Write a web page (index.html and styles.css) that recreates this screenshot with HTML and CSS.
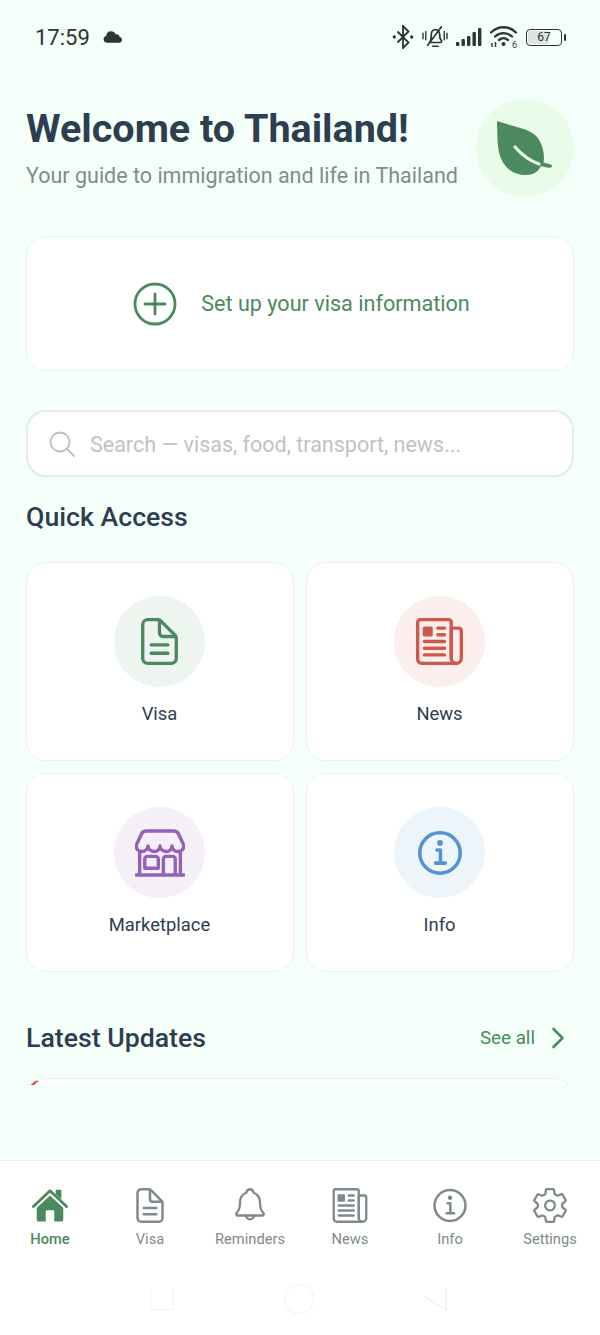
FILE: index.html
```html
<!DOCTYPE html>
<html lang="en">
<head>
<meta charset="utf-8">
<title>Welcome to Thailand</title>
<link rel="stylesheet" href="styles.css">
</head>
<body>
<div class="app">
  <div class="status">
    <div class="status-left">
      <span class="time">17:59</span>
      <svg class="cloud" viewBox="0 0 20 13"><path d="M4 13a3.6 3.6 0 0 1-.6-7.1A5.2 5.2 0 0 1 8.4 1c2.3 0 4 1.300 4.800 3.200a4 4 0 0 1 1.200-.2c1.700 0 3 1.300 3.200 3 1.400.3 2.400 1.500 2.400 3 0 1.700-1.300 3-3 3z"/></svg>
    </div>
    <div class="status-right">
      <svg class="s-bt" viewBox="0 0 24 26"><path d="M6 7l12 12-6 6V1l6 6L6 19" fill="none" stroke="#2d3436" stroke-width="2"/><circle cx="2.500" cy="13" r="1.800"/><circle cx="21.500" cy="13" r="1.800"/></svg>
      <svg class="s-bell" viewBox="0 0 28 26"><path d="M9 17c1-2 1-4 1-7 0-3 2-5 4.500-5s4.500 2 4.500 5c0 3 0 5 2 7 .5 1 0 2-1 2H9c-1 0-.5-1 0-2zM11.500 23h6M6 22L21 2" fill="none" stroke="#2d3436" stroke-width="1.800" stroke-linecap="round"/><path d="M1 9v6M4 7v9M24 7v9M27 9v6" stroke="#2d3436" stroke-width="1.500" stroke-linecap="round"/></svg>
      <svg class="s-signal" viewBox="0 0 26 18"><rect x="0" y="14" width="3.400" height="4" rx="1"/><rect x="5.500" y="11" width="3.400" height="7" rx="1"/><rect x="11" y="8" width="3.400" height="10" rx="1"/><rect x="16.500" y="4" width="3.400" height="14" rx="1"/><rect x="22" y="0" width="3.400" height="18" rx="1"/></svg>
      <svg class="s-wifi" viewBox="0 0 28 26"><path d="M1 8.500C8 1.500 19 1.500 26 8.500M5 12.500c5-4.500 12-4.500 17 0M9 16c3-2.500 6-2.500 9 0" fill="none" stroke="#2d3436" stroke-width="2.300" stroke-linecap="round"/><circle cx="13.500" cy="20" r="2"/><path d="M2 23v-4M5.500 23v-5M8 21h0" stroke="#2d3436" stroke-width="1.500"/><text x="22" y="24" class="s-wifi-num">6</text></svg>
      <div class="battery"><div class="battery-body"><span class="battery-fill"></span><span class="battery-num">67</span></div><span class="battery-cap"></span></div>
    </div>
  </div>

  <main class="main">
    <header class="hero">
      <div>
        <h1 class="title">Welcome to Thailand!</h1>
        <p class="subtitle">Your guide to immigration and life in Thailand</p>
      </div>
      <div class="leaf-badge">
        <svg class="leaf" viewBox="0 0 58 56"><path d="M2.500 1.500C1.500 1 .8 1.500 1 3c.5 8 0 20 2 29 3 14 13 23 27 23 7 0 12-3 15-9l6 1.500c1.500.3 3.500.5 4.500-.2 1-.9.500-2.300-1-2.800l-7-2C49 35 47 26 42 18 34 8 18 7 2.500 1.500z" fill="#4a8a5e"/><path d="M19 27c6 7 13 13 24 17" fill="none" stroke="#e9fbe9" stroke-width="3.200" stroke-linecap="round"/></svg>
      </div>
    </header>

    <section class="setup">
      <svg class="setup-icon" viewBox="0 0 44 44"><circle cx="22" cy="22" r="20" fill="none" stroke="#4a8a5e" stroke-width="2.800"/><path d="M22 12v20M12 22h20" stroke="#4a8a5e" stroke-width="2.800" stroke-linecap="round"/></svg>
      <span class="setup-text">Set up your visa information</span>
    </section>

    <div class="search">
      <svg class="search-icon" viewBox="0 0 26 26"><circle cx="11" cy="11" r="9.500" fill="none" stroke="#b9bec0" stroke-width="1.800"/><path d="M18 18l7 7" stroke="#b9bec0" stroke-width="1.800" stroke-linecap="round"/></svg>
      <span class="search-text">Search — visas, food, transport, news...</span>
    </div>

    <h2 class="section-title quick-title">Quick Access</h2>

    <div class="grid">
      <div class="tile">
        <div class="tile-circle c-green">
          <svg class="tile-icon large" viewBox="60 32 392 448" fill="none" stroke="#4a8a5e" stroke-width="32" stroke-linejoin="round" stroke-linecap="round"><path d="M416 221.250V416a48 48 0 0 1-48 48H144a48 48 0 0 1-48-48V96a48 48 0 0 1 48-48h98.750a32 32 0 0 1 22.620 9.370l141.260 141.260a32 32 0 0 1 9.370 22.620z"/><path d="M256 56v120a32 32 0 0 0 32 32h120M176 288h160M176 368h160"/></svg>
        </div>
        <span class="tile-label">Visa</span>
      </div>
      <div class="tile">
        <div class="tile-circle c-red">
          <svg class="tile-icon large" viewBox="32 32 448 448" fill="none" stroke="#d0584a" stroke-width="32" stroke-linejoin="round" stroke-linecap="round"><path d="M368 415.860V72a24.070 24.070 0 0 0-24-24H72a24.070 24.070 0 0 0-24 24v352a40.120 40.120 0 0 0 40 40h328"/><path d="M416 464h0a48 48 0 0 1-48-48V128h72a24 24 0 0 1 24 24v264a48 48 0 0 1-48 48z"/><path d="M240 128h64M240 192h64M112 256h192M112 320h192M112 384h192"/><path fill="#d0584a" stroke="none" d="M176 208h-64a16 16 0 0 1-16-16v-64a16 16 0 0 1 16-16h64a16 16 0 0 1 16 16v64a16 16 0 0 1-16 16z"/></svg>
        </div>
        <span class="tile-label">News</span>
      </div>
      <div class="tile">
        <div class="tile-circle c-purple">
          <svg class="tile-icon wide" viewBox="20 32 472 448" fill="none" stroke="#9361b5" stroke-width="32" stroke-linejoin="round" stroke-linecap="round"><path d="M448 448V240M64 240v208M382.470 48H129.530c-21.790 0-41.470 12-49.930 30.460L36.300 173c-14.580 31.810 9.630 67.850 47.190 69h2c31.400 0 56.850-25.180 56.850-52.230 0 27 25.460 52.230 56.860 52.230s56.800-23.380 56.800-52.230c0 27 25.450 52.230 56.850 52.230s56.860-23.380 56.860-52.230c0 28.850 25.450 52.230 56.850 52.230h1.950c37.560-1.170 61.770-37.210 47.190-69l-43.300-94.540C423.940 60 404.260 48 382.470 48zM32 464h448M136 288h80a24 24 0 0 1 24 24v88H112v-88a24 24 0 0 1 24-24zM288 464V312a24 24 0 0 1 24-24h64a24 24 0 0 1 24 24v152"/></svg>
        </div>
        <span class="tile-label">Marketplace</span>
      </div>
      <div class="tile">
        <div class="tile-circle c-blue">
          <svg class="tile-icon" viewBox="48 48 400 400" fill="none" stroke="#5295d2" stroke-width="32" stroke-linejoin="round" stroke-linecap="round"><path d="M248 64C146.390 64 64 146.390 64 248s82.390 184 184 184 184-82.390 184-184S349.610 64 248 64z"/><path d="M220 220h32v116"/><path d="M208 340h88"/><path fill="#5295d2" stroke="none" d="M248 130a26 26 0 1 0 26 26 26 26 0 0 0-26-26z"/></svg>
        </div>
        <span class="tile-label">Info</span>
      </div>
    </div>

    <div class="latest-head">
      <h2 class="section-title">Latest Updates</h2>
      <div class="see-all">
        <span>See all</span>
        <svg class="chevron" viewBox="0 0 14 22"><path d="M2.500 2l9 9-9 9" fill="none" stroke="#4a8a5e" stroke-width="2.600" stroke-linecap="round" stroke-linejoin="round"/></svg>
      </div>
    </div>
    <div class="update-card"></div>
  </main>

  <div class="spacer"></div>

  <nav class="nav">
    <div class="tabs">
      <div class="tab active">
        <svg class="tab-icon" viewBox="0 0 38 36"><path d="M1.500 19L19 2.500 36.500 19" fill="none" stroke="#4a8a5e" stroke-width="3" stroke-linecap="round" stroke-linejoin="round"/><path d="M25 1.500h6v10l-6-5.500z" fill="#4a8a5e"/><path d="M19 7.500L5 20.500V33a2 2 0 0 0 2 2h7.500V24a1 1 0 0 1 1-1h7a1 1 0 0 1 1 1v11H31a2 2 0 0 0 2-2V20.500z" fill="#4a8a5e"/></svg>
        <span class="tab-label">Home</span>
      </div>
      <div class="tab">
        <svg class="tab-icon" viewBox="68 32 376 448" fill="none" stroke="#7e8a8e" stroke-width="32" stroke-linejoin="round" stroke-linecap="round"><path d="M416 221.250V416a48 48 0 0 1-48 48H144a48 48 0 0 1-48-48V96a48 48 0 0 1 48-48h98.750a32 32 0 0 1 22.620 9.370l141.260 141.260a32 32 0 0 1 9.370 22.620z"/><path d="M256 56v120a32 32 0 0 0 32 32h120M176 288h160M176 368h160"/></svg>
        <span class="tab-label">Visa</span>
      </div>
      <div class="tab">
        <svg class="tab-icon" viewBox="64 32 384 448" fill="none" stroke="#7e8a8e" stroke-width="30" stroke-linejoin="round" stroke-linecap="round"><path d="M427.680 351.430C402 320 383.870 304 383.870 217.350 383.870 138 343.350 109.730 310 96c-4.430-1.820-8.600-6-9.950-10.550C294.200 65.540 277.800 48 256 48s-38.210 17.550-44 37.470c-1.350 4.600-5.520 8.710-9.950 10.530-33.390 13.750-73.870 41.920-73.870 121.350C128.130 304 110 320 84.320 351.430 73.680 364.450 83 384 101.610 384h308.880c18.510 0 27.770-19.610 17.190-32.570z"/><path d="M206 384a50 50 0 0 0 100 0"/></svg>
        <span class="tab-label">Reminders</span>
      </div>
      <div class="tab">
        <svg class="tab-icon" viewBox="32 32 448 448" fill="none" stroke="#7e8a8e" stroke-width="30" stroke-linejoin="round" stroke-linecap="round"><path d="M368 415.860V72a24.070 24.070 0 0 0-24-24H72a24.070 24.070 0 0 0-24 24v352a40.120 40.120 0 0 0 40 40h328"/><path d="M416 464h0a48 48 0 0 1-48-48V128h72a24 24 0 0 1 24 24v264a48 48 0 0 1-48 48z"/><path d="M240 128h64M240 192h64M112 256h192M112 320h192M112 384h192"/><path fill="#7e8a8e" stroke="none" d="M176 208h-64a16 16 0 0 1-16-16v-64a16 16 0 0 1 16-16h64a16 16 0 0 1 16 16v64a16 16 0 0 1-16 16z"/></svg>
        <span class="tab-label">News</span>
      </div>
      <div class="tab">
        <svg class="tab-icon" viewBox="40 40 416 416" fill="none" stroke="#7e8a8e" stroke-width="30" stroke-linejoin="round" stroke-linecap="round"><path d="M248 64C146.390 64 64 146.390 64 248s82.390 184 184 184 184-82.390 184-184S349.610 64 248 64z"/><path d="M220 220h32v116"/><path d="M208 340h88"/><path fill="#7e8a8e" stroke="none" d="M248 130a26 26 0 1 0 26 26 26 26 0 0 0-26-26z"/></svg>
        <span class="tab-label">Info</span>
      </div>
      <div class="tab">
        <svg class="tab-icon" viewBox="26 26 460 460" fill="none" stroke="#7e8a8e" stroke-width="30" stroke-linejoin="round" stroke-linecap="round"><path d="M262.290 192.310a64 64 0 1 0 57.400 57.400 64.130 64.130 0 0 0-57.400-57.400zM416.390 256a154.340 154.340 0 0 1-1.530 20.790l45.210 35.460a10.810 10.810 0 0 1 2.450 13.750l-42.770 74a10.810 10.810 0 0 1-13.140 4.590l-44.900-18.080a16.110 16.110 0 0 0-15.170 1.750A164.480 164.480 0 0 1 325 400.800a15.940 15.940 0 0 0-8.820 12.140l-6.730 47.890a11.080 11.080 0 0 1-10.680 9.170h-85.540a11.110 11.110 0 0 1-10.690-8.870l-6.720-47.820a16.070 16.070 0 0 0-9-12.220 155.300 155.300 0 0 1-21.460-12.570 16 16 0 0 0-15.110-1.710l-44.890 18.070a10.810 10.810 0 0 1-13.140-4.580l-42.770-74a10.800 10.800 0 0 1 2.450-13.750l38.210-30a16.050 16.050 0 0 0 6-14.080c-.36-4.170-.58-8.330-.58-12.500s.21-8.270.58-12.350a16 16 0 0 0-6.070-13.940l-38.190-30A10.810 10.810 0 0 1 49.480 186l42.770-74a10.810 10.810 0 0 1 13.140-4.590l44.900 18.080a16.110 16.110 0 0 0 15.170-1.750A164.480 164.480 0 0 1 187 111.200a15.940 15.940 0 0 0 8.820-12.140l6.730-47.890A11.080 11.080 0 0 1 213.230 42h85.540a11.110 11.110 0 0 1 10.690 8.870l6.720 47.820a16.070 16.070 0 0 0 9 12.220 155.300 155.300 0 0 1 21.460 12.570 16 16 0 0 0 15.110 1.710l44.890-18.070a10.810 10.810 0 0 1 13.140 4.580l42.770 74a10.800 10.800 0 0 1-2.450 13.750l-38.210 30a16.050 16.050 0 0 0-6.050 14.080c.33 4.140.55 8.300.55 12.470z"/></svg>
        <span class="tab-label">Settings</span>
      </div>
    </div>
    <div class="gestures">
      <span class="g-square"></span>
      <span class="g-circle"></span>
      <svg class="g-back" viewBox="0 0 24 24"><path d="M1 10l21 13V1" fill="none" stroke="#f0f2f1" stroke-width="1.500" stroke-linejoin="round"/></svg>
    </div>
  </nav>
</div>
</body>
</html>
```

FILE: styles.css
```css
* {
  box-sizing: border-box;
}

html,
body {
  margin: 0;
  padding: 0;
}

body {
  font-family: Roboto, "Liberation Sans", sans-serif;
  background: #f5fff9;
}

.app {
  width: 600px;
  height: 1335px;
  display: flex;
  flex-direction: column;
  overflow: hidden;
  background: #f5fff9;
}

/* Status bar */
.status {
  height: 74px;
  flex: none;
  padding: 24px 34px 0 35px;
  display: flex;
  justify-content: space-between;
  align-items: flex-start;
  color: #2d3436;
}

.status-left {
  display: flex;
  align-items: center;
  gap: 13px;
  height: 28px;
}

.time {
  font-size: 22px;
  line-height: 28px;
}

.cloud {
  width: 19px;
  height: 13px;
  margin-top: -4px;
  fill: #2d3436;
}

.status-right {
  display: flex;
  align-items: center;
  gap: 8px;
  height: 26px;
}

.status-right svg {
  fill: #2d3436;
  display: block;
}

.s-bt {
  width: 22px;
  height: 24px;
}

.s-bell {
  width: 26px;
  height: 24px;
}

.s-signal {
  width: 26px;
  height: 18px;
}

.s-wifi {
  width: 28px;
  height: 26px;
}

.s-wifi-num {
  font-size: 9px;
  fill: #2d3436;
}

.battery {
  display: flex;
  align-items: center;
  gap: 2px;
}

.battery-body {
  position: relative;
  width: 36px;
  height: 17px;
  border: 1.500px solid #2d3436;
  border-radius: 4px;
  display: flex;
  align-items: center;
  justify-content: center;
  overflow: hidden;
}

.battery-fill {
  position: absolute;
  left: 1px;
  top: 1px;
  bottom: 1px;
  width: 21px;
  background: #dfe3e2;
  border-radius: 2px;
}

.battery-num {
  position: relative;
  font-size: 12px;
  line-height: 14px;
}

.battery-cap {
  width: 2px;
  height: 7px;
  background: #2d3436;
  border-radius: 1px;
}

/* Main content */
.main {
  flex: none;
  height: 1011px;
  padding: 25px 26px 0;
  overflow: hidden;
}

.hero {
  display: flex;
  justify-content: space-between;
  align-items: center;
  height: 98px;
}

.title {
  margin: 0;
  font-size: 39.500px;
  line-height: 44px;
  font-weight: 700;
  color: #2c3e50;
}

.subtitle {
  margin: 11px 0 0;
  font-size: 21.500px;
  line-height: 28px;
  color: #7f8c8d;
}

.leaf-badge {
  width: 98px;
  height: 98px;
  flex: none;
  border-radius: 50%;
  background: #e9fbe9;
  display: flex;
  align-items: center;
  justify-content: center;
}

.leaf {
  width: 58px;
  height: 56px;
}

.setup {
  margin-top: 39px;
  height: 135px;
  background: #fff;
  border: 1px solid #e9f2ec;
  border-radius: 20px;
  display: flex;
  align-items: center;
  justify-content: center;
  gap: 24px;
  padding-left: 3px;
}

.setup-icon {
  width: 44px;
  height: 44px;
}

.setup-text {
  font-size: 21.600px;
  color: #4a8a5e;
}

.search {
  margin-top: 39px;
  height: 67px;
  background: #fff;
  border: 2px solid #e3ebe6;
  border-radius: 20px;
  display: flex;
  align-items: center;
  padding-left: 21px;
  gap: 15px;
}

.search-icon {
  width: 26px;
  height: 26px;
}

.search-text {
  padding-top: 2px;
  font-size: 21.500px;
  color: #bdc3c7;
}

.section-title {
  margin: 0;
  font-size: 26.700px;
  line-height: 32px;
  font-weight: 500;
  color: #2c3e50;
}

.quick-title {
  margin-top: 24px;
}

.grid {
  margin-top: 29px;
  display: grid;
  grid-template-columns: 1fr 1fr;
  grid-auto-rows: 199px;
  column-gap: 12px;
  row-gap: 12px;
}

.tile {
  background: #fff;
  border: 1px solid #e9f2ec;
  border-radius: 20px;
  padding: 33px 1px 0 0;
  display: flex;
  flex-direction: column;
  align-items: center;
}

.tile-circle {
  width: 91px;
  height: 91px;
  border-radius: 50%;
  display: flex;
  align-items: center;
  justify-content: center;
}

.c-green {
  background: #eef5f0;
}

.c-red {
  background: #fbeeed;
}

.c-purple {
  background: #f5eff8;
}

.c-blue {
  background: #eef5fa;
}

.tile-icon {
  width: 44px;
  height: 44px;
}

.tile-icon.large {
  width: 47px;
  height: 47px;
}

.tile-icon.wide {
  width: 50px;
  height: 48px;
}

.tile-label {
  margin-top: 15px;
  font-size: 18.400px;
  line-height: 24px;
  font-weight: 400;
  color: #2c3e50;
}

.latest-head {
  margin-top: 50px;
  display: flex;
  justify-content: space-between;
  align-items: center;
}

.see-all {
  display: flex;
  align-items: center;
  gap: 16px;
  padding-right: 9px;
  font-size: 18.800px;
  color: #4a8a5e;
}

.chevron {
  width: 14px;
  height: 22px;
}

.update-card {
  margin-top: 24px;
  height: 100px;
  background: #fff;
  border: 1px solid #e9f2ec;
  border-left: 4px solid #d9503f;
  border-radius: 20px;
}

.spacer {
  flex: 1;
}

/* Bottom nav */
.nav {
  flex: none;
  height: 175px;
  background: #fff;
  border-top: 1px solid #e8eeea;
  padding-top: 27px;
}

.tabs {
  display: grid;
  grid-template-columns: repeat(6, 100px);
}

.tab {
  display: flex;
  flex-direction: column;
  align-items: center;
  gap: 6px;
}

.tab-icon {
  width: 36px;
  height: 35px;
}

.tab-label {
  font-size: 14.700px;
  line-height: 20px;
  font-weight: 400;
  color: #7e8a8e;
}

.tab.active .tab-label {
  font-weight: 500;
  color: #4a8a5e;
}

.gestures {
  margin-top: 35px;
  display: flex;
  align-items: center;
  justify-content: center;
  gap: 110px;
  padding-right: 2px;
}

.g-square {
  width: 24px;
  height: 22px;
  border: 1.500px solid #f0f2f1;
  border-top-color: transparent;
  border-radius: 4px;
}

.g-circle {
  width: 30px;
  height: 30px;
  border: 1.500px solid #f0f2f1;
  border-radius: 50%;
}

.g-back {
  width: 24px;
  height: 24px;
}
```
